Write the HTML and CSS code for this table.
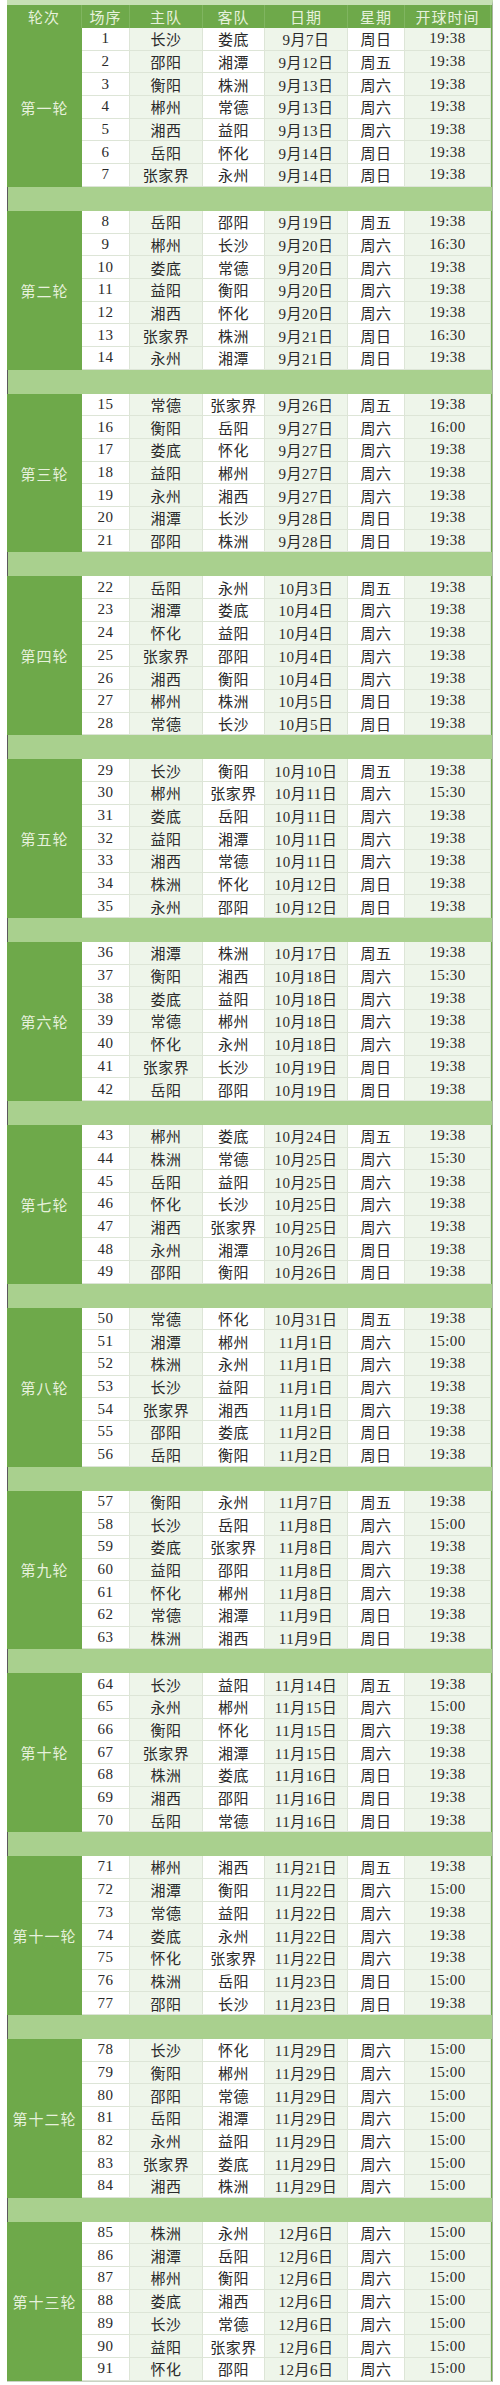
FILE: index.html
```html
<!DOCTYPE html>
<html lang="zh-CN">
<head>
<meta charset="utf-8">
<title>赛程表</title>
<link rel="stylesheet" href="styles.css">
</head>
<body>
<div class="schedule">
  <div class="head">
    <span>轮次</span><span>场序</span><span>主队</span><span>客队</span><span>日期</span><span>星期</span><span>开球时间</span>
  </div>

  <div class="round">
    <div class="rnd">第一轮</div>
    <div>1</div><div>长沙</div><div>娄底</div><div>9月7日</div><div>周日</div><div>19:38</div>
    <div>2</div><div>邵阳</div><div>湘潭</div><div>9月12日</div><div>周五</div><div>19:38</div>
    <div>3</div><div>衡阳</div><div>株洲</div><div>9月13日</div><div>周六</div><div>19:38</div>
    <div>4</div><div>郴州</div><div>常德</div><div>9月13日</div><div>周六</div><div>19:38</div>
    <div>5</div><div>湘西</div><div>益阳</div><div>9月13日</div><div>周六</div><div>19:38</div>
    <div>6</div><div>岳阳</div><div>怀化</div><div>9月14日</div><div>周日</div><div>19:38</div>
    <div>7</div><div>张家界</div><div>永州</div><div>9月14日</div><div>周日</div><div>19:38</div>
  </div>
  <div class="gap"></div>

  <div class="round">
    <div class="rnd">第二轮</div>
    <div>8</div><div>岳阳</div><div>邵阳</div><div>9月19日</div><div>周五</div><div>19:38</div>
    <div>9</div><div>郴州</div><div>长沙</div><div>9月20日</div><div>周六</div><div>16:30</div>
    <div>10</div><div>娄底</div><div>常德</div><div>9月20日</div><div>周六</div><div>19:38</div>
    <div>11</div><div>益阳</div><div>衡阳</div><div>9月20日</div><div>周六</div><div>19:38</div>
    <div>12</div><div>湘西</div><div>怀化</div><div>9月20日</div><div>周六</div><div>19:38</div>
    <div>13</div><div>张家界</div><div>株洲</div><div>9月21日</div><div>周日</div><div>16:30</div>
    <div>14</div><div>永州</div><div>湘潭</div><div>9月21日</div><div>周日</div><div>19:38</div>
  </div>
  <div class="gap"></div>

  <div class="round">
    <div class="rnd">第三轮</div>
    <div>15</div><div>常德</div><div>张家界</div><div>9月26日</div><div>周五</div><div>19:38</div>
    <div>16</div><div>衡阳</div><div>岳阳</div><div>9月27日</div><div>周六</div><div>16:00</div>
    <div>17</div><div>娄底</div><div>怀化</div><div>9月27日</div><div>周六</div><div>19:38</div>
    <div>18</div><div>益阳</div><div>郴州</div><div>9月27日</div><div>周六</div><div>19:38</div>
    <div>19</div><div>永州</div><div>湘西</div><div>9月27日</div><div>周六</div><div>19:38</div>
    <div>20</div><div>湘潭</div><div>长沙</div><div>9月28日</div><div>周日</div><div>19:38</div>
    <div>21</div><div>邵阳</div><div>株洲</div><div>9月28日</div><div>周日</div><div>19:38</div>
  </div>
  <div class="gap"></div>

  <div class="round">
    <div class="rnd">第四轮</div>
    <div>22</div><div>岳阳</div><div>永州</div><div>10月3日</div><div>周五</div><div>19:38</div>
    <div>23</div><div>湘潭</div><div>娄底</div><div>10月4日</div><div>周六</div><div>19:38</div>
    <div>24</div><div>怀化</div><div>益阳</div><div>10月4日</div><div>周六</div><div>19:38</div>
    <div>25</div><div>张家界</div><div>邵阳</div><div>10月4日</div><div>周六</div><div>19:38</div>
    <div>26</div><div>湘西</div><div>衡阳</div><div>10月4日</div><div>周六</div><div>19:38</div>
    <div>27</div><div>郴州</div><div>株洲</div><div>10月5日</div><div>周日</div><div>19:38</div>
    <div>28</div><div>常德</div><div>长沙</div><div>10月5日</div><div>周日</div><div>19:38</div>
  </div>
  <div class="gap"></div>

  <div class="round">
    <div class="rnd">第五轮</div>
    <div>29</div><div>长沙</div><div>衡阳</div><div>10月10日</div><div>周五</div><div>19:38</div>
    <div>30</div><div>郴州</div><div>张家界</div><div>10月11日</div><div>周六</div><div>15:30</div>
    <div>31</div><div>娄底</div><div>岳阳</div><div>10月11日</div><div>周六</div><div>19:38</div>
    <div>32</div><div>益阳</div><div>湘潭</div><div>10月11日</div><div>周六</div><div>19:38</div>
    <div>33</div><div>湘西</div><div>常德</div><div>10月11日</div><div>周六</div><div>19:38</div>
    <div>34</div><div>株洲</div><div>怀化</div><div>10月12日</div><div>周日</div><div>19:38</div>
    <div>35</div><div>永州</div><div>邵阳</div><div>10月12日</div><div>周日</div><div>19:38</div>
  </div>
  <div class="gap"></div>

  <div class="round">
    <div class="rnd">第六轮</div>
    <div>36</div><div>湘潭</div><div>株洲</div><div>10月17日</div><div>周五</div><div>19:38</div>
    <div>37</div><div>衡阳</div><div>湘西</div><div>10月18日</div><div>周六</div><div>15:30</div>
    <div>38</div><div>娄底</div><div>益阳</div><div>10月18日</div><div>周六</div><div>19:38</div>
    <div>39</div><div>常德</div><div>郴州</div><div>10月18日</div><div>周六</div><div>19:38</div>
    <div>40</div><div>怀化</div><div>永州</div><div>10月18日</div><div>周六</div><div>19:38</div>
    <div>41</div><div>张家界</div><div>长沙</div><div>10月19日</div><div>周日</div><div>19:38</div>
    <div>42</div><div>岳阳</div><div>邵阳</div><div>10月19日</div><div>周日</div><div>19:38</div>
  </div>
  <div class="gap"></div>

  <div class="round">
    <div class="rnd">第七轮</div>
    <div>43</div><div>郴州</div><div>娄底</div><div>10月24日</div><div>周五</div><div>19:38</div>
    <div>44</div><div>株洲</div><div>常德</div><div>10月25日</div><div>周六</div><div>15:30</div>
    <div>45</div><div>岳阳</div><div>益阳</div><div>10月25日</div><div>周六</div><div>19:38</div>
    <div>46</div><div>怀化</div><div>长沙</div><div>10月25日</div><div>周六</div><div>19:38</div>
    <div>47</div><div>湘西</div><div>张家界</div><div>10月25日</div><div>周六</div><div>19:38</div>
    <div>48</div><div>永州</div><div>湘潭</div><div>10月26日</div><div>周日</div><div>19:38</div>
    <div>49</div><div>邵阳</div><div>衡阳</div><div>10月26日</div><div>周日</div><div>19:38</div>
  </div>
  <div class="gap"></div>

  <div class="round">
    <div class="rnd">第八轮</div>
    <div>50</div><div>常德</div><div>怀化</div><div>10月31日</div><div>周五</div><div>19:38</div>
    <div>51</div><div>湘潭</div><div>郴州</div><div>11月1日</div><div>周六</div><div>15:00</div>
    <div>52</div><div>株洲</div><div>永州</div><div>11月1日</div><div>周六</div><div>19:38</div>
    <div>53</div><div>长沙</div><div>益阳</div><div>11月1日</div><div>周六</div><div>19:38</div>
    <div>54</div><div>张家界</div><div>湘西</div><div>11月1日</div><div>周六</div><div>19:38</div>
    <div>55</div><div>邵阳</div><div>娄底</div><div>11月2日</div><div>周日</div><div>19:38</div>
    <div>56</div><div>岳阳</div><div>衡阳</div><div>11月2日</div><div>周日</div><div>19:38</div>
  </div>
  <div class="gap"></div>

  <div class="round">
    <div class="rnd">第九轮</div>
    <div>57</div><div>衡阳</div><div>永州</div><div>11月7日</div><div>周五</div><div>19:38</div>
    <div>58</div><div>长沙</div><div>岳阳</div><div>11月8日</div><div>周六</div><div>15:00</div>
    <div>59</div><div>娄底</div><div>张家界</div><div>11月8日</div><div>周六</div><div>19:38</div>
    <div>60</div><div>益阳</div><div>邵阳</div><div>11月8日</div><div>周六</div><div>19:38</div>
    <div>61</div><div>怀化</div><div>郴州</div><div>11月8日</div><div>周六</div><div>19:38</div>
    <div>62</div><div>常德</div><div>湘潭</div><div>11月9日</div><div>周日</div><div>19:38</div>
    <div>63</div><div>株洲</div><div>湘西</div><div>11月9日</div><div>周日</div><div>19:38</div>
  </div>
  <div class="gap"></div>

  <div class="round">
    <div class="rnd">第十轮</div>
    <div>64</div><div>长沙</div><div>益阳</div><div>11月14日</div><div>周五</div><div>19:38</div>
    <div>65</div><div>永州</div><div>郴州</div><div>11月15日</div><div>周六</div><div>15:00</div>
    <div>66</div><div>衡阳</div><div>怀化</div><div>11月15日</div><div>周六</div><div>19:38</div>
    <div>67</div><div>张家界</div><div>湘潭</div><div>11月15日</div><div>周六</div><div>19:38</div>
    <div>68</div><div>株洲</div><div>娄底</div><div>11月16日</div><div>周日</div><div>19:38</div>
    <div>69</div><div>湘西</div><div>邵阳</div><div>11月16日</div><div>周日</div><div>19:38</div>
    <div>70</div><div>岳阳</div><div>常德</div><div>11月16日</div><div>周日</div><div>19:38</div>
  </div>
  <div class="gap"></div>

  <div class="round">
    <div class="rnd">第十一轮</div>
    <div>71</div><div>郴州</div><div>湘西</div><div>11月21日</div><div>周五</div><div>19:38</div>
    <div>72</div><div>湘潭</div><div>衡阳</div><div>11月22日</div><div>周六</div><div>15:00</div>
    <div>73</div><div>常德</div><div>益阳</div><div>11月22日</div><div>周六</div><div>19:38</div>
    <div>74</div><div>娄底</div><div>永州</div><div>11月22日</div><div>周六</div><div>19:38</div>
    <div>75</div><div>怀化</div><div>张家界</div><div>11月22日</div><div>周六</div><div>19:38</div>
    <div>76</div><div>株洲</div><div>岳阳</div><div>11月23日</div><div>周日</div><div>15:00</div>
    <div>77</div><div>邵阳</div><div>长沙</div><div>11月23日</div><div>周日</div><div>19:38</div>
  </div>
  <div class="gap"></div>

  <div class="round">
    <div class="rnd">第十二轮</div>
    <div>78</div><div>长沙</div><div>怀化</div><div>11月29日</div><div>周六</div><div>15:00</div>
    <div>79</div><div>衡阳</div><div>郴州</div><div>11月29日</div><div>周六</div><div>15:00</div>
    <div>80</div><div>邵阳</div><div>常德</div><div>11月29日</div><div>周六</div><div>15:00</div>
    <div>81</div><div>岳阳</div><div>湘潭</div><div>11月29日</div><div>周六</div><div>15:00</div>
    <div>82</div><div>永州</div><div>益阳</div><div>11月29日</div><div>周六</div><div>15:00</div>
    <div>83</div><div>张家界</div><div>娄底</div><div>11月29日</div><div>周六</div><div>15:00</div>
    <div>84</div><div>湘西</div><div>株洲</div><div>11月29日</div><div>周六</div><div>15:00</div>
  </div>
  <div class="gap"></div>

  <div class="round">
    <div class="rnd">第十三轮</div>
    <div>85</div><div>株洲</div><div>永州</div><div>12月6日</div><div>周六</div><div>15:00</div>
    <div>86</div><div>湘潭</div><div>岳阳</div><div>12月6日</div><div>周六</div><div>15:00</div>
    <div>87</div><div>郴州</div><div>衡阳</div><div>12月6日</div><div>周六</div><div>15:00</div>
    <div>88</div><div>娄底</div><div>湘西</div><div>12月6日</div><div>周六</div><div>15:00</div>
    <div>89</div><div>长沙</div><div>常德</div><div>12月6日</div><div>周六</div><div>15:00</div>
    <div>90</div><div>益阳</div><div>张家界</div><div>12月6日</div><div>周六</div><div>15:00</div>
    <div>91</div><div>怀化</div><div>邵阳</div><div>12月6日</div><div>周六</div><div>15:00</div>
  </div>
</div>
</body>
</html>
```

FILE: styles.css
```css
html, body {
  margin: 0;
  padding: 0;
  background: #ffffff;
}

body {
  font-family: "Liberation Serif", "Noto Sans CJK SC", serif;
  font-size: 15px;
  color: #2a2a2a;
}

.schedule {
  width: 485px;
  margin-left: 7px;
  background-color: #6ea94a;
  border-top: 5px solid #c6e0b4;
  border-right: 1px solid #a8b3a2;
  border-bottom: 1px solid #c9d2c4;
}

.head,
.round {
  display: grid;
  grid-template-columns: 75px 48px 73px 62px 83px 57px 86px;
}

.head {
  height: 23px;
  background-color: #6ea94a;
}

.head > span {
  display: flex;
  align-items: center;
  justify-content: center;
  color: #e6f1dc;
  letter-spacing: 1px;
  border-right: 1px solid #80b560;
}

.round {
  grid-template-rows: repeat(7, 22.7px);
}

.round > div {
  display: flex;
  align-items: center;
  justify-content: center;
  background: #ffffff;
  border-right: 1px solid #dde5d7;
  border-bottom: 1px solid #dde5d7;
  box-sizing: border-box;
  letter-spacing: 0.5px;
}

.round > div:nth-child(odd) {
  background: #eef5ea;
}

.round > div.rnd {
  grid-row: 1 / span 7;
  background: #6ea94a;
  color: #e6f1dc;
  letter-spacing: 1px;
  border: none;
}

.gap {
  height: 24px;
  background: #a9d08e;
  border-left: 1px solid #5a5a5a;
  box-sizing: border-box;
}
```
